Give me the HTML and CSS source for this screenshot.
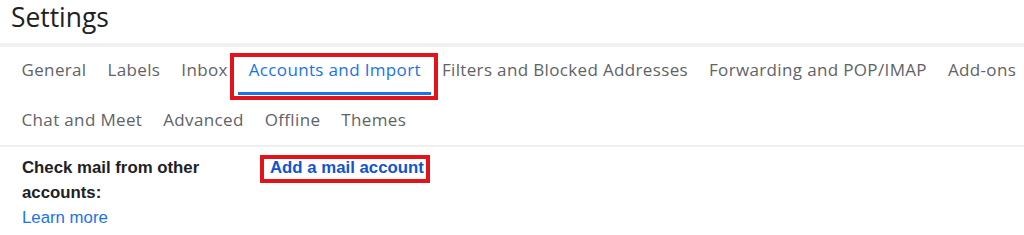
FILE: index.html
```html
<!DOCTYPE html>
<html lang="en">
<head>
<meta charset="utf-8">
<title>Settings</title>
<link rel="stylesheet" href="styles.css">
</head>
<body>
<div class="page">
  <header class="header">
    <h1 class="title">Settings</h1>
  </header>
  <nav class="tabs">
    <a class="tab">General</a>
    <a class="tab">Labels</a>
    <a class="tab">Inbox</a>
    <a class="tab tab-active">Accounts and Import</a>
    <a class="tab">Filters and Blocked Addresses</a>
    <a class="tab">Forwarding and POP/IMAP</a>
    <a class="tab">Add-ons</a>
    <a class="tab">Chat and Meet</a>
    <a class="tab">Advanced</a>
    <a class="tab">Offline</a>
    <a class="tab">Themes</a>
  </nav>
  <section class="content">
    <div class="row">
      <div class="label">
        <div class="label-text">Check mail from other accounts:</div>
        <a class="learn">Learn more</a>
      </div>
      <div class="value">
        <a class="action">Add a mail account</a>
      </div>
    </div>
  </section>
</div>
</body>
</html>
```

FILE: styles.css
```css
html, body {
  margin: 0;
  padding: 0;
  background: #ffffff;
  overflow: hidden;
}

.page {
  width: 1060px;
}

.header {
  height: 43px;
  padding-left: 11px;
  border-bottom: 4px solid #f1f1f1;
}

.title {
  margin: 0;
  font-family: "Open Sans", sans-serif;
  font-weight: 400;
  font-size: 26.4px;
  line-height: 34px;
  color: #202124;
}

.tabs {
  display: flex;
  flex-wrap: wrap;
  row-gap: 2px;
  padding-left: 11px;
  border-bottom: 2px solid #efefef;
}

.tab {
  position: relative;
  box-sizing: border-box;
  height: 48px;
  padding: 11px 10.5px 0;
  font-family: "Open Sans", sans-serif;
  font-size: 17px;
  letter-spacing: 0.35px;
  line-height: 23px;
  color: #5f6368;
  white-space: nowrap;
}

.tab-active {
  color: #1a73e8;
  border-bottom: 3px solid #1a73e8;
}

.tab-active::after {
  content: "";
  position: absolute;
  left: -8px;
  right: -7px;
  top: 6px;
  bottom: -8px;
  border: 4px solid #e3131b;
}

.content {
  padding: 8px 0 0 22px;
  font-family: "Liberation Sans", Arial, sans-serif;
  font-size: 16.8px;
  line-height: 25px;
}

.row {
  display: grid;
  grid-template-columns: 248px 1fr;
}

.label-text {
  font-weight: 700;
  color: #202124;
}

.learn {
  color: #1a73e8;
}

.action {
  position: relative;
  display: inline-block;
  font-weight: 700;
  color: #1155cc;
}

.action::after {
  content: "";
  position: absolute;
  left: -10px;
  right: -6px;
  top: 0;
  bottom: -3px;
  border: 4px solid #e3131b;
}
```
